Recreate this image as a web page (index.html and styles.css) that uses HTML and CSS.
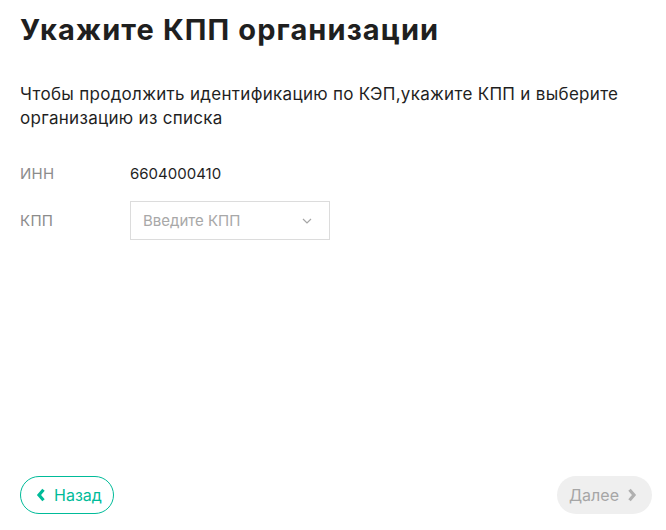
FILE: index.html
```html
<!DOCTYPE html>
<html lang="ru">
<head>
<meta charset="utf-8">
<link rel="stylesheet" href="styles.css">
</head>
<body>
<div class="page">
  <main class="content">
    <h1 class="title">Укажите КПП организации</h1>
    <p class="lead">Чтобы продолжить идентификацию по КЭП,укажите КПП и выберите организацию из списка</p>
    <div class="form">
      <div class="row">
        <div class="label">ИНН</div>
        <div class="value">6604000410</div>
      </div>
      <div class="row">
        <div class="label">КПП</div>
        <div class="select">
          <span class="placeholder">Введите КПП</span>
          <svg class="caret" width="10" height="6" viewBox="0 0 10 6"><path d="M1 1l4 4 4-4" fill="none" stroke="#a6a6a6" stroke-width="1.2"/></svg>
        </div>
      </div>
    </div>
  </main>
  <footer class="actions">
    <button class="btn btn-back">
      <svg class="chev" width="10" height="14" viewBox="0 0 10 14"><path d="M7.5 1.8L3 7l4.5 5.2" fill="none" stroke="#00bb99" stroke-width="3.2"/></svg>
      <span>Назад</span>
    </button>
    <button class="btn btn-next" disabled>
      <span>Далее</span>
      <svg class="chev" width="10" height="14" viewBox="0 0 10 14"><path d="M2.5 1.8L7 7l-4.5 5.2" fill="none" stroke="#b0b0b0" stroke-width="3.2"/></svg>
    </button>
  </footer>
</div>
</body>
</html>
```
FILE: styles.css
```css
* { box-sizing: border-box; }
html, body { margin: 0; padding: 0; background: #fff; }
body { font-family: Inter, "Noto Sans", sans-serif; color: #1f1f1f; }
.page {
  width: 666px;
  height: 530px;
  padding: 0 14px 16px 20px;
  display: flex;
  flex-direction: column;
  justify-content: space-between;
}
.title {
  margin: 12px 0 0;
  font-size: 29px;
  font-weight: 700;
  line-height: 36px;
  letter-spacing: 1.1px;
  color: #1f1f1f;
}
.lead {
  margin: 34px 0 0;
  font-size: 17px;
  line-height: 24px;
  letter-spacing: 0.3px;
  color: #1f1f1f;
}
.form { margin-top: 24px; display: flex; flex-direction: column; gap: 9px; }
.row { display: flex; align-items: center; min-height: 38px; }
.label { width: 110px; font-size: 15px; color: #8c8c8c; letter-spacing: 0.3px; }
.value { font-size: 15px; color: #1f1f1f; }
.select {
  width: 200px;
  height: 39px;
  border: 1px solid #dcdcdc;
  display: flex;
  align-items: center;
  justify-content: space-between;
  padding: 0 17px 0 12px;
}
.placeholder { font-size: 15px; color: #a8a8a8; }
.actions { display: flex; justify-content: space-between; align-items: center; }
.btn {
  height: 38px;
  border-radius: 19px;
  font-family: inherit;
  font-size: 16px;
  display: flex;
  align-items: center;
  gap: 8px;
  padding: 0;
}
.chev { flex-shrink: 0; display: block; }
.btn-back {
  border: 1px solid #00bb99;
  background: #fff;
  color: #00bb99;
  padding-left: 15px;
  width: 94px;
}
.btn-next {
  border: none;
  background: #efefef;
  color: #a6a6a6;
  width: 95px;
  padding-left: 12px;
}
```
